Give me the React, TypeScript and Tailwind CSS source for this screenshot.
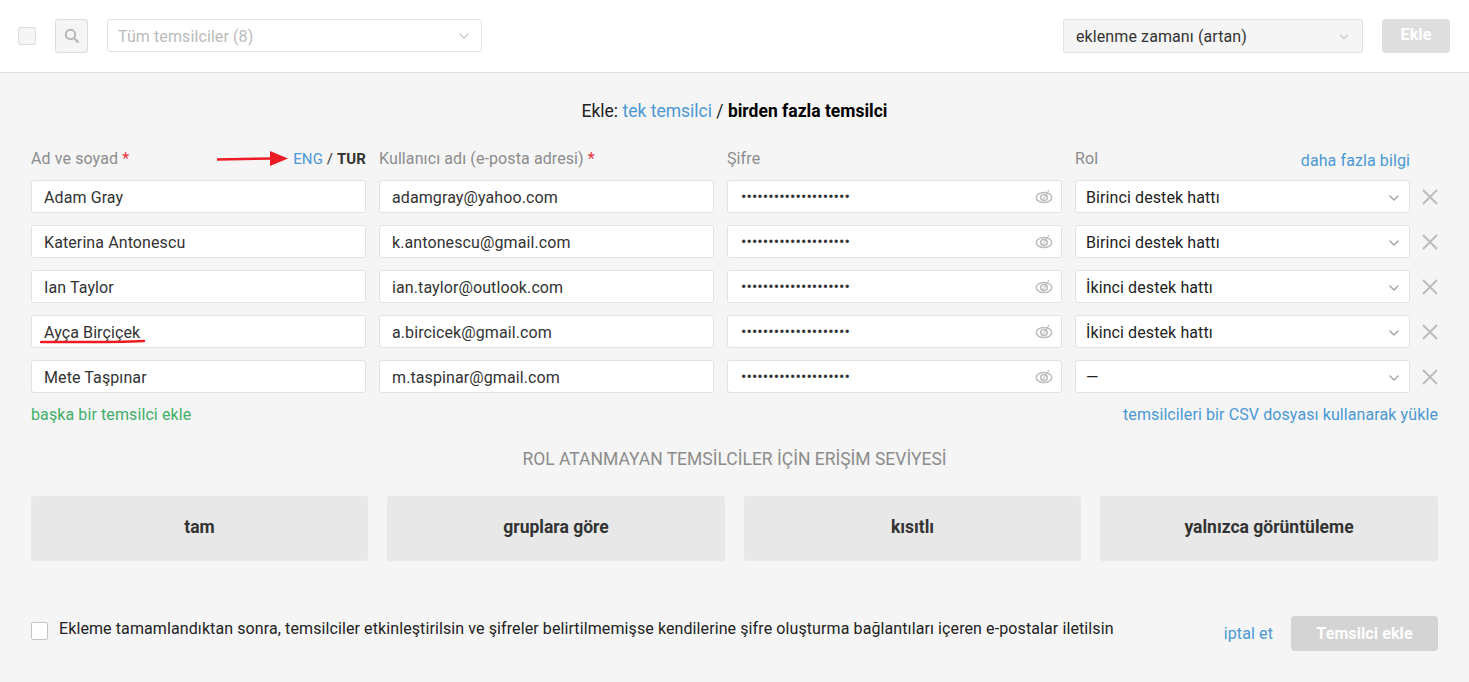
import React from "react";
import { ChevronDown } from "lucide-react";

const rows = [
  ["Adam Gray", "adamgray@yahoo.com", "Birinci destek hattı"],
  ["Katerina Antonescu", "k.antonescu@gmail.com", "Birinci destek hattı"],
  ["Ian Taylor", "ian.taylor@outlook.com", "İkinci destek hattı"],
  ["Ayça Birçiçek", "a.bircicek@gmail.com", "İkinci destek hattı"],
  ["Mete Taşpınar", "m.taspinar@gmail.com", "—"],
];

function EyeOff() {
  return (
    <svg width="18" height="16" viewBox="0 0 18 16" fill="none" stroke="#bdbdbd" strokeWidth="1.5">
      <ellipse cx="9" cy="8.500" rx="7.800" ry="5" />
      <ellipse cx="9" cy="8.500" rx="3.300" ry="3" />
      <path d="M7 12 14 1" strokeWidth="1.100" />
    </svg>
  );
}

function SearchIcon() {
  return (
    <svg width="16" height="16" viewBox="0 0 16 16" fill="none" stroke="#b8b8b8">
      <circle cx="6.500" cy="6.500" r="4.700" strokeWidth="2" />
      <path d="M10 10 14.500 14.500" strokeWidth="2.400" />
    </svg>
  );
}

function Cross() {
  return (
    <svg width="16" height="16" viewBox="0 0 16 16" fill="none" stroke="#bcbcbc" strokeWidth="2">
      <path d="M1 1 15 15M15 1 1 15" />
    </svg>
  );
}

function Field({ children, className = "" }: { children: React.ReactNode; className?: string }) {
  return (
    <div className={`relative flex h-[33px] items-center rounded-[3px] border border-[#e2e2e2] bg-white text-[#333] ${className}`}>
      {children}
    </div>
  );
}

export default function App() {
  return (
    <div className="h-[682px] overflow-hidden bg-[#f5f5f5] font-['Roboto',sans-serif] text-[16px] tracking-[0.1px] text-[#333]">
      <header className="flex h-[73px] items-center border-b border-[#e0e0e0] bg-white pb-px pl-[18px] pr-[19px]">
        <div className="h-[18px] w-[18px] rounded-[2px] border border-[#dcdcdc] bg-[#f5f5f5]" />
        <div className="ml-[19px] flex h-[34px] w-[33px] items-center justify-center rounded-[3px] border border-[#dcdcdc] bg-[#f5f5f5]">
          <SearchIcon />
        </div>
        <div className="ml-[19px] flex h-[33px] w-[375px] items-center justify-between rounded-[3px] border border-[#e2e2e2] bg-white pl-[10px] pr-[9px] text-[#bbb]">
          <span className="pt-[2px]">Tüm temsilciler (8)</span>
          <ChevronDown size={16} color="#c8c8c8" />
        </div>
        <div className="ml-auto flex h-[34px] w-[300px] items-center justify-between rounded-[2px] border border-[#e2e2e2] bg-[#f5f5f5] pl-[12px] pr-[11px] text-[#333]">
          <span className="pt-[2px]">eklenme zamanı (artan)</span>
          <ChevronDown size={14} color="#c8c8c8" className="mt-[2px]" />
        </div>
        <div className="ml-[19px] flex h-[34px] w-[68px] items-center justify-center rounded-[4px] bg-[#dedede] pb-[2px] font-bold text-white">
          Ekle
        </div>
      </header>

      <main className="px-[31px]">
        <div className="mt-[26px] h-[24px] text-center text-[17.5px] leading-[24px] tracking-normal text-[#222]">
          Ekle: <span className="text-[#4a98d3]">tek temsilci</span> / <span className="font-bold text-black">birden fazla temsilci</span>
        </div>

        <div className="mt-[24px] grid grid-cols-[335px_335px_335px_335px_1fr] gap-x-[13px] gap-y-[12px]">
          <div className="relative flex h-[21px] items-start justify-between leading-[24px] text-[#8c8c8c]">
            <span>Ad ve soyad <span className="text-[#e8333a]">*</span></span>
            <svg className="absolute left-[186px] top-[3px]" width="72" height="18" viewBox="0 0 72 18">
              <path d="M0 9.500 56 8.500" stroke="#ed1c24" strokeWidth="2.500" strokeLinecap="round" />
              <path d="M53 1 71 8.500 53 16Z" fill="#ed1c24" />
            </svg>
            <span className="text-[15px]"><span className="text-[#4a98d3]">ENG</span> <span className="text-[#333]">/</span> <span className="font-bold text-[#333]">TUR</span></span>
          </div>
          <div className="h-[21px] leading-[24px] text-[#8c8c8c]">Kullanıcı adı (e-posta adresi) <span className="text-[#e8333a]">*</span></div>
          <div className="h-[21px] leading-[24px] text-[#8c8c8c]">Şifre</div>
          <div className="flex h-[21px] justify-between leading-[24px] text-[#8c8c8c]">
            <span>Rol</span>
            <span className="pt-[2px] text-[#4a98d3]">daha fazla bilgi</span>
          </div>
          <div />

          {rows.map((r, i) => (
            <React.Fragment key={r[0]}>
              <Field className="pl-[12px] pt-[2px]">
                {r[0]}
                {i === 3 && (
                  <svg className="absolute left-[8px] top-[23px]" width="106" height="5" viewBox="0 0 106 5">
                    <path d="M1 3C35 3 70 3.500 104 2" stroke="#ed1c24" strokeWidth="2.500" strokeLinecap="round" fill="none" />
                  </svg>
                )}
              </Field>
              <Field className="pl-[12px] pt-[2px]">{r[1]}</Field>
              <Field className="justify-between pl-[13px] pr-[8px]">
                <span className="tracking-[0.05px] text-[#333]">{"••••••••••••••••••••"}</span>
                <EyeOff />
              </Field>
              <Field className="justify-between pl-[10px] pr-[7px] pt-[2px]">
                <span className="text-[#222]">{r[2]}</span>
                <ChevronDown size={16} strokeWidth={2.2} color="#a5a5a5" />
              </Field>
              <div className="flex h-[33px] items-center">
                <div className="-ml-[1px]"><Cross /></div>
              </div>
            </React.Fragment>
          ))}
        </div>

        <div className="mt-[10px] flex h-[24px] items-center justify-between">
          <span className="text-[#3fae6a]">başka bir temsilci ekle</span>
          <span className="text-[#4a98d3]">temsilcileri bir CSV dosyası kullanarak yükle</span>
        </div>

        <div className="mt-[20px] h-[24px] text-center text-[17.5px] leading-[24px] tracking-normal text-[#8c8c8c]">
          ROL ATANMAYAN TEMSİLCİLER İÇİN ERİŞİM SEVİYESİ
        </div>

        <div className="mt-[25px] grid grid-cols-[337px_338px_337px_338px] gap-x-[19px]">
          {["tam", "gruplara göre", "kısıtlı", "yalnızca görüntüleme"].map((t) => (
            <div key={t} className="flex h-[65px] items-center justify-center rounded-[3px] bg-[#e8e8e8] pb-[3px] text-[17.5px] font-bold tracking-normal text-[#333]">
              {t}
            </div>
          ))}
        </div>

        <div className="mt-[55px] flex h-[35px] items-center">
          <div className="mb-[6px] h-[18px] w-[17px] rounded-[2px] border border-[#c4c4c4] bg-white" />
          <span className="mb-[10px] ml-[11px] text-[#222]">
            Ekleme tamamlandıktan sonra, temsilciler etkinleştirilsin ve şifreler belirtilmemişse kendilerine şifre oluşturma bağlantıları içeren e-postalar iletilsin
          </span>
          <span className="ml-auto text-[#4a98d3]">iptal et</span>
          <div className="ml-[18px] flex h-[35px] w-[147px] items-center justify-center rounded-[4px] bg-[#d4d4d4] font-bold text-white">
            Temsilci ekle
          </div>
        </div>
      </main>
    </div>
  );
}
